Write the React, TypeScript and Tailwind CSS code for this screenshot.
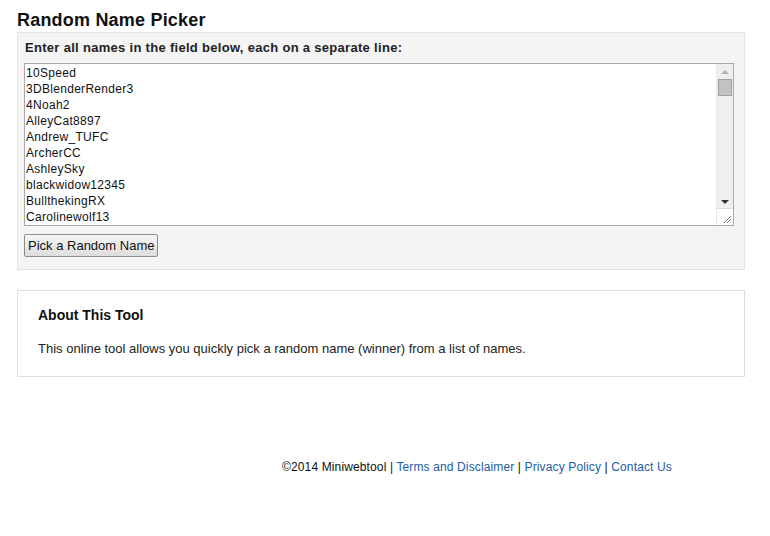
import React from "react";

const names = [
  "10Speed",
  "3DBlenderRender3",
  "4Noah2",
  "AlleyCat8897",
  "Andrew_TUFC",
  "ArcherCC",
  "AshleySky",
  "blackwidow12345",
  "BullthekingRX",
  "Carolinewolf13",
];

export default function App() {
  return (
    <div className="min-h-[536px] w-[770px] bg-white text-black font-['Liberation_Sans',Arial,sans-serif]">
      <div className="pl-[17px] pt-[10px]">
        <h1 className="text-[18px] font-bold leading-[21px] tracking-[0.2px] text-[#111]">Random Name Picker</h1>
        <div className="mt-[1px] w-[728px] border border-[#e3e3e3] bg-[#f4f4f4] px-[6px] pb-[12px] pt-[7px]">
          <div className="pl-[1px] text-[13px] font-bold leading-[16px] tracking-[0.3px] text-[#222]">
            Enter all names in the field below, each on a separate line:
          </div>
          <div className="mt-[7px] flex h-[163px] w-[710px] border border-[#a9a9a9] bg-white">
            <div className="flex-1 overflow-hidden pl-[1px] pt-[1px] text-[12px] leading-[16px] tracking-[0.3px] text-[#111]">
              {names.map((n) => (
                <div key={n}>{n}</div>
              ))}
            </div>
            <div className="flex w-[17px] flex-col border-l border-[#e8e8e8] bg-[#efefef]">
              <div className="flex h-[15px] items-center justify-center">
                <div className="h-0 w-0 border-x-[4px] border-b-[4px] border-x-transparent border-b-[#b0b0b0]" />
              </div>
              <div className="mx-[1px] h-[17px] border border-[#a0a0a0] bg-[#c2c2c2]" />
              <div className="flex-1" />
              <div className="flex h-[13px] items-center justify-center">
                <div className="h-0 w-0 border-x-[4px] border-t-[4px] border-x-transparent border-t-[#333]" />
              </div>
              <div className="relative h-[17px] border-t border-[#ddd] bg-white">
                <svg className="absolute bottom-[1px] right-[1px]" width="9" height="9" viewBox="0 0 9 9">
                  <path d="M1 8 L8 1 M4 8 L8 4" stroke="#777" strokeWidth="1" />
                </svg>
              </div>
            </div>
          </div>
          <button className="mt-[8px] h-[23px] rounded-[2px] border border-[#8e8e8e] bg-gradient-to-b from-[#f6f6f6] to-[#dedede] px-[3px] text-[13px] leading-[20px] text-[#111]">
            Pick a Random Name
          </button>
        </div>
        <div className="mt-[20px] w-[728px] border border-[#dedede] bg-white px-[20px] pb-[20px] pt-[16px]">
          <h2 className="text-[14px] font-bold leading-[16px] text-[#111]">About This Tool</h2>
          <p className="mt-[18px] text-[13px] leading-[15px] text-[#222]">
            This online tool allows you quickly pick a random name (winner) from a list of names.
          </p>
        </div>
      </div>
      <div className="mt-[83px] pl-[282px] text-[12px] leading-[15px] tracking-[0.13px] text-[#111]">
        ©2014 Miniwebtool | <a className="text-[#1d5ca6]">Terms and Disclaimer</a> |{" "}
        <a className="text-[#1d5ca6]">Privacy Policy</a> | <a className="text-[#1d5ca6]">Contact Us</a>
      </div>
    </div>
  );
}
